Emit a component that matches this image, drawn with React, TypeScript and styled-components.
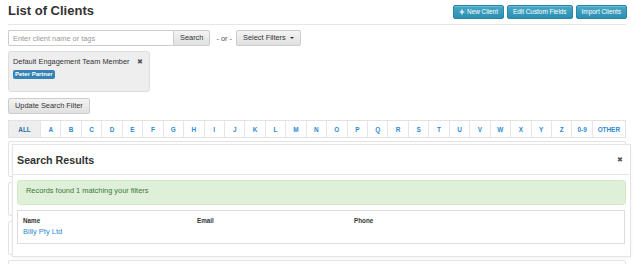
import React from 'react';
import styled, { createGlobalStyle } from 'styled-components';

const GlobalStyle = createGlobalStyle`
  html, body {
    margin: 0;
    padding: 0;
    background: #fff;
  }
  body {
    font-family: "Liberation Sans", Arial, sans-serif;
    color: #333;
  }
`;

const letters = 'ABCDEFGHIJKLMNOPQRSTUVWXYZ'.split('').concat(['0-9']);

const App = () => {
  return (
    <>
      <GlobalStyle />
      <Page>
        <PageHeader>
          <Title>List of Clients</Title>
          <HeaderActions>
            <InfoButton>
              <PlusIcon viewBox="0 0 10 10">
                <path d="M5 1v8M1 5h8" stroke="#fff" strokeWidth="2" />
              </PlusIcon>
              New Client
            </InfoButton>
            <InfoButton>Edit Custom Fields</InfoButton>
            <InfoButton>Import Clients</InfoButton>
          </HeaderActions>
        </PageHeader>

        <SearchRow>
          <SearchInput placeholder="Enter client name or tags" />
          <GrayButton $joined>Search</GrayButton>
          <OrText>- or -</OrText>
          <GrayButton>
            Select Filters <Caret />
          </GrayButton>
        </SearchRow>

        <FilterBox>
          <FilterHead>
            <span>Default Engagement Team Member</span>
            <RemoveMark>✖</RemoveMark>
          </FilterHead>
          <Tag>Peter Partner</Tag>
        </FilterBox>

        <UpdateRow>
          <GrayButton>Update Search Filter</GrayButton>
        </UpdateRow>

        <AlphaBar>
          <AlphaCell $active $width="31px">ALL</AlphaCell>
          {letters.map((l) => (
            <AlphaCell key={l}>{l}</AlphaCell>
          ))}
          <AlphaCell $width="32px">OTHER</AlphaCell>
        </AlphaBar>

        <BehindList>
          <BehindCard $height={34} />
          <BehindCard $height={32} />
          <BehindCard $height={32} />
          <BehindCard $height={32} />
        </BehindList>

        <Modal>
          <ModalHeader>
            <ModalTitle>Search Results</ModalTitle>
            <CloseMark>✖</CloseMark>
          </ModalHeader>
          <ModalBody>
            <SuccessAlert>Records found 1 matching your filters</SuccessAlert>
            <ResultTable>
              <ResultRow>
                <HeadCell>Name</HeadCell>
                <HeadCell>Email</HeadCell>
                <HeadCell>Phone</HeadCell>
              </ResultRow>
              <ResultRow>
                <ClientLink href="#">Billy Pty Ltd</ClientLink>
                <span />
                <span />
              </ResultRow>
            </ResultTable>
          </ModalBody>
        </Modal>
      </Page>
    </>
  );
};

const Page = styled.div`
  position: relative;
  width: 618px;
  height: 264px;
  padding: 0 8px;
  overflow: hidden;
  display: flex;
  flex-direction: column;

  & > * {
    flex-shrink: 0;
  }
`;

const PageHeader = styled.div`
  display: flex;
  justify-content: space-between;
  align-items: flex-start;
  height: 24px;
  border-bottom: 1px solid #e6e6e6;
`;

const Title = styled.h1`
  margin: 3px 0 0;
  font-size: 13px;
  line-height: 16px;
  font-weight: bold;
  color: #333;
`;

const HeaderActions = styled.div`
  display: flex;
  gap: 3px;
  margin-top: 5px;
  margin-right: -1px;
`;

const InfoButton = styled.button`
  display: flex;
  align-items: center;
  gap: 2px;
  height: 14px;
  padding: 0 5px;
  border: 1px solid #2a86a6;
  border-radius: 2px;
  background: linear-gradient(#47a9c9, #2c8fb1);
  color: #fff;
  font-family: inherit;
  font-size: 6.4px;
  line-height: 1;
  box-shadow: inset 0 1px 0 rgba(255, 255, 255, 0.2);
`;

const PlusIcon = styled.svg`
  width: 6px;
  height: 6px;
`;

const SearchRow = styled.div`
  display: flex;
  align-items: center;
  margin-top: 5px;
  height: 16px;
`;

const SearchInput = styled.input`
  box-sizing: border-box;
  width: 165px;
  height: 16px;
  padding: 0 4px;
  border: 1px solid #ccc;
  border-right: none;
  border-radius: 2px 0 0 2px;
  font-family: inherit;
  font-size: 7.4px;
  color: #555;
  outline: none;

  &::placeholder {
    color: #999;
  }
`;

const GrayButton = styled.button<{ $joined?: boolean }>`
  display: flex;
  align-items: center;
  gap: 4px;
  box-sizing: border-box;
  height: 16px;
  padding: 0 6px;
  border: 1px solid #ccc;
  border-radius: ${({ $joined }) => ($joined ? '0 2px 2px 0' : '2px')};
  background: linear-gradient(#f4f4f4, #e0e0e0);
  color: #333;
  font-family: inherit;
  font-size: 7.4px;
  line-height: 1;
`;

const Caret = styled.span`
  width: 0;
  height: 0;
  border-left: 2.5px solid transparent;
  border-right: 2.5px solid transparent;
  border-top: 2.5px solid #333;
`;

const OrText = styled.span`
  margin: 0 4px 0 6px;
  font-size: 7.4px;
  color: #555;
`;

const FilterBox = styled.div`
  box-sizing: border-box;
  width: 142px;
  height: 41px;
  margin-top: 5px;
  padding: 5px 5px 0 4px;
  border: 1px solid #ddd;
  border-radius: 3px;
  background: #eee;
  font-size: 7.4px;
`;

const FilterHead = styled.div`
  display: flex;
  justify-content: space-between;
  align-items: center;
  line-height: 10px;
`;

const RemoveMark = styled.span`
  font-size: 6.5px;
  color: #555;
  margin-right: 1px;
`;

const Tag = styled.span`
  display: inline-block;
  margin-top: 3px;
  padding: 1px 2px;
  border-radius: 2px;
  background: #3583b5;
  color: #fff;
  font-size: 6px;
  font-weight: bold;
  line-height: 7px;
`;

const UpdateRow = styled.div`
  display: flex;
  margin-top: 6px;
`;

const AlphaBar = styled.div`
  display: flex;
  height: 18px;
  margin-top: 6px;
  border: 1px solid #e3e3e3;
  box-sizing: border-box;
`;

const AlphaCell = styled.span<{ $active?: boolean; $width?: string }>`
  display: flex;
  align-items: center;
  justify-content: center;
  flex: ${({ $width }) => ($width ? `0 0 ${$width}` : '1 1 0')};
  border-left: 1px solid #e6e6e6;
  background: ${({ $active }) => ($active ? '#eee' : '#fff')};
  color: ${({ $active }) => ($active ? '#2f6fa8' : '#2a8ad2')};
  font-size: 6.4px;
  font-weight: bold;

  &:first-child {
    border-left: none;
  }
`;

const BehindList = styled.div`
  display: flex;
  flex-direction: column;
  gap: 5px;
  margin-top: 3px;
`;

const BehindCard = styled.div<{ $height: number }>`
  flex-shrink: 0;
  height: ${({ $height }) => $height}px;
  border: 1px solid #e3e3e3;
  border-radius: 2px;
`;

const Modal = styled.div`
  position: absolute;
  top: 144px;
  left: 12px;
  width: 619px;
  height: 113px;
  box-sizing: border-box;
  border: 1px solid #e5e5e5;
  background: #fff;
  box-shadow: 0 1px 3px rgba(0, 0, 0, 0.06);
`;

const ModalHeader = styled.div`
  display: flex;
  justify-content: space-between;
  align-items: center;
  height: 29px;
  padding: 0 7px 0 4px;
  border-bottom: 1px solid #e5e5e5;
`;

const ModalTitle = styled.h4`
  margin: 0;
  font-size: 10.7px;
  font-weight: bold;
  color: #333;
`;

const CloseMark = styled.span`
  font-size: 6.5px;
  color: #555;
`;

const ModalBody = styled.div`
  padding: 5px 4px;
`;

const SuccessAlert = styled.div`
  box-sizing: border-box;
  height: 25px;
  padding: 5px 8px 0;
  border: 1px solid #d6e9c6;
  border-radius: 3px;
  background: #dff0d8;
  color: #3c763d;
  font-size: 7.4px;
  line-height: 10px;
`;

const ResultTable = styled.div`
  box-sizing: border-box;
  width: 608px;
  height: 34px;
  margin-top: 5px;
  padding: 5px 5px 0;
  border: 1px solid #ddd;
`;

const ResultRow = styled.div`
  display: grid;
  grid-template-columns: 174px 157px 1fr;
`;

const HeadCell = styled.span`
  font-size: 6.3px;
  font-weight: bold;
  line-height: 10px;
  color: #333;
`;

const ClientLink = styled.a`
  font-size: 7.5px;
  line-height: 11px;
  color: #2a8ad2;
  text-decoration: none;
`;

export default App;
